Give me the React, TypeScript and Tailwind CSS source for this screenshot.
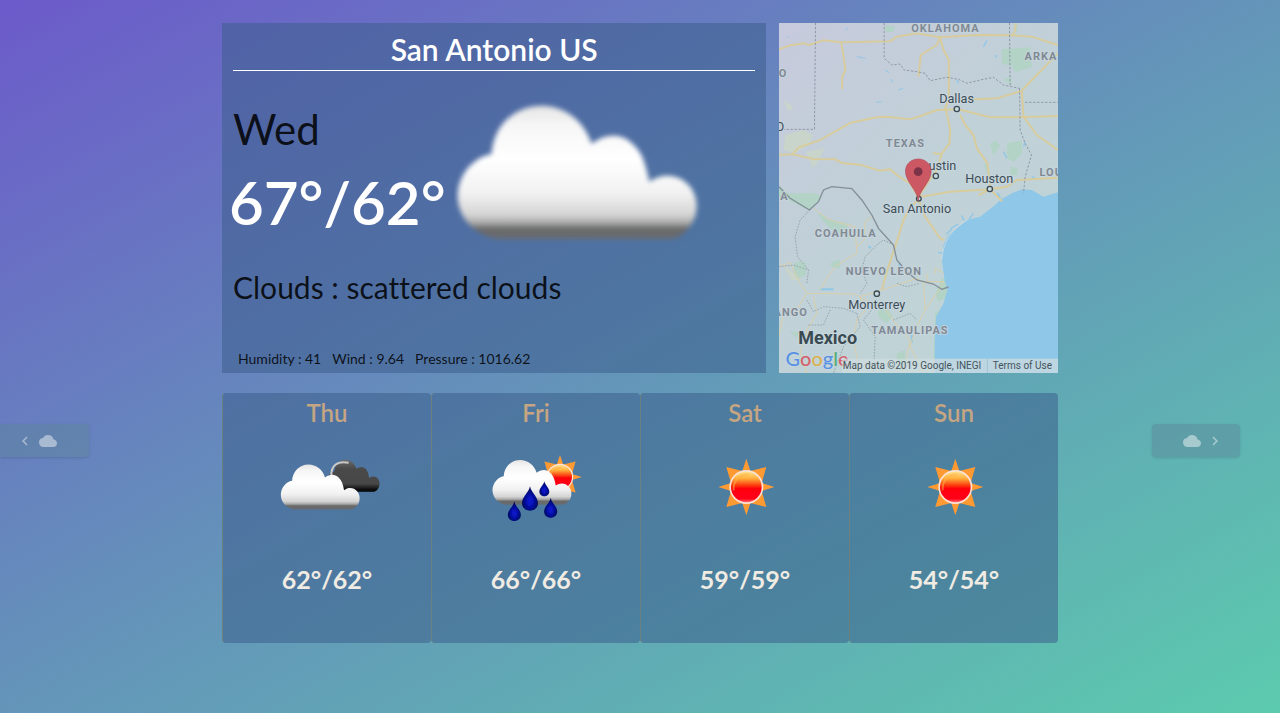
import React from "react";
import { MdCloud, MdChevronLeft, MdChevronRight } from "react-icons/md";

const CLOUD =
  "M165 450 C95 435 48 380 50 315 C55 250 100 205 152 195 C158 110 220 50 302 50 C370 50 430 95 452 165 C490 135 540 130 575 165 C605 190 615 230 625 278 C665 250 715 255 745 290 C782 335 770 400 725 435 C710 447 695 450 685 450 Z";

const RAYS =
  "M0 -85 L12 -48 L60 -60 L46 -12 L84 0 L46 12 L60 60 L12 48 L0 85 L-12 48 L-60 60 L-46 12 L-84 0 L-46 -12 L-60 -60 L-12 -48 Z";

const DROP = "M0 -36 C4 -16 24 -4 24 14 C24 28 13 37 0 37 C-13 37 -24 28 -24 14 C-24 -4 -4 -16 0 -36 Z";

function Defs() {
  return (
    <svg width="0" height="0" className="absolute" aria-hidden="true">
      <defs>
        <linearGradient id="cloud" x1="0" y1="0" x2="0" y2="1">
          <stop offset="0" stopColor="#e4e4e4" />
          <stop offset="0.14" stopColor="#f6f6f6" />
          <stop offset="0.4" stopColor="#ffffff" />
          <stop offset="0.66" stopColor="#f1f1f1" />
          <stop offset="0.82" stopColor="#d4d4d4" />
          <stop offset="0.88" stopColor="#a8a8a8" />
          <stop offset="0.92" stopColor="#696969" />
          <stop offset="1" stopColor="#696c70" />
        </linearGradient>
        <linearGradient id="darkCloud" x1="0" y1="0" x2="0" y2="1">
          <stop offset="0" stopColor="#6b6b6b" />
          <stop offset="0.3" stopColor="#484848" />
          <stop offset="0.75" stopColor="#474747" />
          <stop offset="0.95" stopColor="#080808" />
        </linearGradient>
        <linearGradient id="sun" x1="0" y1="0" x2="0" y2="1">
          <stop offset="0" stopColor="#ffe18c" />
          <stop offset="0.22" stopColor="#ffb03c" />
          <stop offset="0.45" stopColor="#fb3a10" />
          <stop offset="0.55" stopColor="#ff0010" />
          <stop offset="0.88" stopColor="#ff0014" />
          <stop offset="1" stopColor="#ff6a70" />
        </linearGradient>
        <radialGradient id="drop" cx="0.5" cy="0.6" r="0.5">
          <stop offset="0" stopColor="#0a18d8" />
          <stop offset="0.5" stopColor="#0610a8" />
          <stop offset="1" stopColor="#040a5c" />
        </radialGradient>
        <filter id="soft">
          <feGaussianBlur stdDeviation="8" />
        </filter>
        <filter id="softSmall">
          <feGaussianBlur stdDeviation="2" />
        </filter>
      </defs>
    </svg>
  );
}

function SunShape({ x, y }: { x: number; y: number }) {
  return (
    <g transform={`translate(${x} ${y})`}>
      <path d={RAYS} fill="#ff9a33" />
      <circle r="51" fill="#fbe3d6" />
      <circle r="46" fill="url(#sun)" />
      <path d="M-38 10 C-40 -22 -18 -38 6 -38" fill="none" stroke="#ffb347" strokeWidth="5" opacity="0.6" />
    </g>
  );
}

function CloudsIcon() {
  return (
    <svg viewBox="170 144 300 300" className="h-[100px] w-[100px] overflow-visible" aria-label="Broken clouds">
      <g filter="url(#softSmall)">
        <g transform="translate(309 200) scale(0.22 0.24)">
          <path d={CLOUD} fill="url(#darkCloud)" />
        </g>
        <path d="M333 258 C333 232 348 214 385 221" fill="none" stroke="#c9c9c9" strokeWidth="6" />
        <g transform="translate(165 210) scale(0.33 0.336)">
          <path d={CLOUD} fill="url(#cloud)" />
        </g>
      </g>
    </svg>
  );
}

function RainIcon() {
  return (
    <svg viewBox="167 144 300 300" className="h-[100px] w-[100px] overflow-visible" aria-label="Rain">
      <g filter="url(#softSmall)">
        <g transform="translate(389 264) scale(0.78)">
          <SunShape x={0} y={0} />
        </g>
        <g transform="translate(170 196) scale(0.33 0.336)">
          <path d={CLOUD} fill="url(#cloud)" />
        </g>
        <path d={DROP} transform="translate(299 328)" fill="url(#drop)" />
        <path d={DROP} transform="translate(342 299) scale(0.62)" fill="url(#drop)" />
        <path d={DROP} transform="translate(252 366) scale(0.82)" fill="url(#drop)" />
        <path d={DROP} transform="translate(361 356) scale(0.82)" fill="url(#drop)" />
      </g>
    </svg>
  );
}

function SunIcon() {
  return (
    <svg viewBox="164 144 300 300" className="h-[100px] w-[100px] overflow-visible" aria-label="Clear sky">
      <g filter="url(#softSmall)">
        <SunShape x={318} y={294} />
      </g>
    </svg>
  );
}

function BigCloud() {
  return (
    <svg viewBox="39 30 750 450" className="h-[150px] w-[250px] shrink-0" aria-label="Scattered clouds">
      <path d={CLOUD} fill="url(#cloud)" filter="url(#soft)" />
    </svg>
  );
}

function MapView() {
  return (
    <svg viewBox="6 9 837 1050" preserveAspectRatio="xMidYMid slice" className="block h-full w-full" aria-label="Map of San Antonio">
      <defs>
        <linearGradient id="land" x1="0" y1="0" x2="0.7" y2="1">
          <stop offset="0" stopColor="#c7cadd" />
          <stop offset="0.45" stopColor="#c1d0d8" />
          <stop offset="1" stopColor="#bfd5d6" />
        </linearGradient>
      </defs>
      <rect x="0" y="0" width="850" height="1070" fill="url(#land)" />

      <g fill="#c9d4ca">
        <path d="M25 345 l55 -15 30 15 -15 30 -40 25 -35 -10z" />
        <path d="M88 395 l55 -10 -20 40 -15 20z" />
        <path d="M20 240 l30 20 -15 15z M15 730 l60 50 -30 0z" />
      </g>
      <g fill="#b2d3c6">
        <path d="M325 16 l28 2 -2 18 -24 0z" />
        <path d="M10 500 l25 20 80 0 20 10 -35 40 -20 -5 -50 -28 -30 -10z" />
        <path d="M120 578 l40 22 50 10 8 50 -30 -20 -35 -20z" />
        <path d="M52 728 l35 -2 0 40 -25 10 -12 -20z M160 728 l30 -10 0 25 -22 0z" />
        <path d="M303 872 l28 -8 18 25 -20 20 -22 -15z M38 935 l25 0 0 20z M360 1000 l25 -10 0 60 -25 0z" />
        <path d="M675 88 l85 -6 5 60 -50 15 -10 -20 -30 -5z M710 12 l12 0 0 25z M680 180 l20 -10 5 25z" />
        <path d="M640 370 l18 -8 12 15 -20 30z M690 370 l45 -8 0 40 -25 25 -20 -15z M700 440 l22 5 0 20 -20 0z M620 430 l15 10 -5 20z" />
        <path d="M495 775 l15 5 0 50 -25 15 -10 -20z M475 880 l15 -10 -10 30 -5 120 -5 0z" />
      </g>

      <path
        d="M850 515 L800 530 L765 510 L735 508 L705 520 L670 540 L655 555 L610 590 L570 600 L545 620 L515 645 L500 675 L495 720 L503 780 L512 808 L500 850 L478 890 L474 960 L474 1070 L850 1070 Z"
        fill="#8fc7e8"
      />
      <g fill="none" stroke="#8fc7e8" strokeWidth="4">
        <path d="M662 518 l12 24 M590 580 l-14 18 M545 612 l-24 14 M525 628 l-18 14 M500 700 l-16 -3 M562 602 l-8 -16" />
        <path d="M240 110 l25 5 M325 150 l12 8 M298 247 l15 -2 M340 178 l10 8 M30 50 l5 0 M205 30 l8 -6 M365 210 l14 -5" strokeWidth="3" />
        <path d="M620 80 l10 -18 M655 105 l5 8 M540 180 l5 10 M680 395 l10 20 M745 365 l-5 15 M765 470 l10 5 M765 50 l8 0" />
        <path d="M130 808 l40 0 M366 730 l5 10 M405 945 l0 25 M275 680 l8 4" strokeWidth="6" />
      </g>
      <path d="M572 600 C520 630 498 670 495 720" fill="none" stroke="#d3e3e8" strokeWidth="2" />

      <g fill="none" stroke="#d8cc9d" strokeWidth="6" strokeLinejoin="round">
        <path d="M6 88 L40 76 L83 70 L98 75 L138 61 L193 67 L340 64 L360 50 L420 40 L490 52 L600 45 L705 46 L765 50 L843 75" />
        <path d="M193 70 L198 95 L206 150 L196 170 L196 208" />
        <path d="M6 404 L46 403 L66 382 L130 360 L222 308 L300 292 L330 290 L400 298 L440 285 L480 270 L545 268 L640 292 L720 292 L843 288" />
        <path d="M46 403 L110 417 L175 418 L198 430 L250 434 L308 452 L340 448 L360 465 L400 490 L424 532" />
        <path d="M490 50 L480 75 L432 105 L425 170" />
        <path d="M490 55 L500 90 L516 120 L516 235 L505 265 L512 290 L520 330 L518 370 L495 400 L480 450 L448 495 L424 535" />
        <path d="M717 10 L715 30 L706 50 M516 242 L660 235 L735 212 L765 180 L843 100" />
        <path d="M550 285 L565 315 L590 345 L600 385 L632 430 L640 500" />
        <path d="M735 212 L740 290 L780 345 L843 390" />
        <path d="M424 532 L520 515 L640 508 L690 500 L720 480 L843 473" />
        <path d="M424 535 L445 590 L490 655 L502 660 M640 508 L676 544 M640 508 L605 525" />
        <path d="M424 540 L400 560 L380 600 L355 680 L330 755 L315 810 M468 400 L495 402" />
      </g>
      <g fill="none" stroke="#dacfaa" strokeWidth="3" strokeLinejoin="round">
        <path d="M110 565 L150 595 L175 605 L235 620 L240 700 L205 720 L175 740 L150 775 L130 810" />
        <path d="M6 740 L40 728 L70 790 L90 820 L230 822 L250 830 L300 815 L360 795 L420 775 L440 785 L500 785" />
        <path d="M285 590 L265 605 L262 660 L240 680" />
        <path d="M90 820 L65 860 L20 880 L6 950 M110 830 L120 880 L90 930 L70 1000 L90 1059" />
        <path d="M250 830 L265 870 L240 900 L230 960 L250 1059" />
        <path d="M250 835 L320 860 L370 930 L400 960 L380 1059 M440 785 L445 870 L480 820 L500 785" />
        <path d="M445 870 L415 930 L400 980 L440 1059 M500 760 L475 745 L475 760 M450 785 L450 760" />
      </g>

      <g fill="none" stroke="#8f98a5" strokeWidth="3" strokeDasharray="7 5">
        <path d="M116 9 L113 328 L20 328 M322 9 L322 115 L345 135 L370 132 L382 150 L420 155 L445 160 L460 182 L510 172 L545 178 L570 190 L610 180 L650 172 L680 195 L728 205" />
        <path d="M698 9 L700 198 M728 205 L730 330 L745 370 L764 405 L745 470 L740 520 M745 247 L843 247" />
      </g>
      <g fill="none" stroke="#98a6ae" strokeWidth="3" strokeDasharray="5 4">
        <path d="M100 568 L70 600 L55 650 L62 710 L95 750 L90 790" />
        <path d="M6 740 L50 735 L95 750 M90 840 L110 875 L140 860 L200 865 L240 880 M95 915 L140 915 L160 870" />
        <path d="M350 675 L320 660 L300 675 L265 710 L255 750 L270 790 L250 820" />
        <path d="M240 880 L250 920 L200 980 L170 1059 M300 850 L260 900 L295 950 L290 1059 M360 790 L390 800 L430 790 M350 900 L400 880 L420 900" />
      </g>
      <path
        d="M6 500 L40 535 L98 570 L125 545 L140 510 L165 500 L225 506 L255 540 L285 585 L305 625 L350 675 L360 720 L390 755 L420 780 L470 792 L495 808 L515 801"
        fill="none"
        stroke="#848e98"
        strokeWidth="4"
      />

      <g className="font-['Roboto',sans-serif] text-[33px] font-bold tracking-[3px]" fill="#7f8994" stroke="#c9d6dd" strokeWidth="5" paintOrder="stroke">
        <text x="403" y="36">OKLAHOMA</text>
        <text x="743" y="119">ARKA</text>
        <text x="327" y="381">TEXAS</text>
        <text x="6" y="170">O</text>
        <text x="10" y="540">A</text>
        <text x="788" y="467">LOU</text>
        <text x="114" y="650">COAHUILA</text>
        <text x="207" y="765">NUEVO LEON</text>
        <text x="-10" y="887">ANGO</text>
        <text x="283" y="942">TAMAULIPAS</text>
      </g>
      <g className="font-['Roboto',sans-serif] text-[38px]" fill="#3c4c57" stroke="#c9d8de" strokeWidth="5" paintOrder="stroke">
        <text x="487" y="248">Dallas</text>
        <text x="455" y="449">ustin</text>
        <text x="565" y="490">Houston</text>
        <text x="318" y="580">San Antonio</text>
        <text x="214" y="866">Monterrey</text>
        <text x="-4" y="332">O</text>
      </g>
      <g fill="#c9d8de" stroke="#3c4c57" strokeWidth="4">
        <circle cx="540" cy="267" r="8" />
        <circle cx="477" cy="468" r="8" />
        <circle cx="639" cy="507" r="8" />
        <circle cx="300" cy="821" r="8" />
        <circle cx="426" cy="536" r="7" />
      </g>
      <text x="64" y="972" className="font-['Roboto',sans-serif] text-[54px] font-bold" fill="#3a4a52" stroke="#c9d8de" strokeWidth="5" paintOrder="stroke">
        Mexico
      </text>

      <path
        d="M424 542 C422 510 386 486 386 454 C386 432 403 417 424 417 C445 417 463 432 463 454 C463 486 427 510 424 542 Z"
        fill="#cc5863"
        stroke="#b04a5e"
        strokeWidth="2"
      />
      <circle cx="424" cy="455" r="13" fill="#7c3347" />

      <text x="26" y="1038" className="font-['Lato',sans-serif] text-[60px] font-medium" stroke="#cbdde0" strokeWidth="3" paintOrder="stroke">
        <tspan fill="#5a90e4">G</tspan>
        <tspan fill="#d4606c">o</tspan>
        <tspan fill="#dbb04e">o</tspan>
        <tspan fill="#5a90e4">g</tspan>
        <tspan fill="#57ab78">l</tspan>
        <tspan fill="#d4606c">e</tspan>
      </text>
      <rect x="195" y="1016" width="650" height="43" fill="#d0dde0" opacity="0.7" />
      <rect x="630" y="1016" width="3" height="43" fill="#9dc5d8" />
      <g className="font-['Roboto',sans-serif] text-[30px]" fill="#44545c">
        <text x="198" y="1047">Map data ©2019 Google, INEGI</text>
        <text x="648" y="1047">Terms of Use</text>
      </g>
    </svg>
  );
}

const days = [
  { day: "Thu", temps: "62°/62°", icon: <CloudsIcon /> },
  { day: "Fri", temps: "66°/66°", icon: <RainIcon /> },
  { day: "Sat", temps: "59°/59°", icon: <SunIcon /> },
  { day: "Sun", temps: "54°/54°", icon: <SunIcon /> },
];

export default function App() {
  return (
    <div className="flex min-h-screen items-start justify-between bg-[linear-gradient(to_bottom_right,#6c5aca,#6495b9_50%,#5ccbae)] font-['Lato','Noto_Sans',sans-serif] [font-variant-ligatures:none]">
      <Defs />
      <nav className="flex h-screen flex-1 items-center justify-start pt-[168px]">
        <button
          type="button"
          aria-label="Previous city"
          className="flex h-[33px] w-[89px] items-center gap-[5px] rounded-r-sm bg-[#5d8598]/45 px-4 text-white/45 shadow"
        >
          <MdChevronLeft size={18} />
          <MdCloud size={18} />
        </button>
      </nav>

      <main className="w-[836px] max-w-full py-[23px]">
        <div className="flex gap-[13px]">
          <section className="flex h-[350px] flex-1 flex-col bg-[#3c5f8c]/55 px-[11px] text-black/85">
            <h1 className="h-12 border-b border-white pt-1.5 text-center text-[30px] leading-10 font-semibold text-white">
              San Antonio US
            </h1>
            <div className="flex pt-7">
              <div className="w-[221px] shrink-0">
                <h2 className="pt-1 text-[42px] leading-[52px]">Wed</h2>
                <p className="-mx-1 pt-4 text-[60px] leading-[62px] font-semibold whitespace-nowrap text-white">67°/62°</p>
              </div>
              <BigCloud />
            </div>
            <p className="pt-[18px] text-[30px] leading-10">Clouds : scattered clouds</p>
            <ul className="mt-auto flex gap-[11px] px-[5px] pb-1 text-[14px] leading-5">
              <li>Humidity : 41</li>
              <li>Wind : 9.64</li>
              <li>Pressure : 1016.62</li>
            </ul>
          </section>
          <aside className="h-[350px] w-1/3">
            <MapView />
          </aside>
        </div>

        <div className="grid grid-cols-4 pt-5">
          {days.map(({ day, temps, icon }) => (
            <article
              key={day}
              className="flex h-[250px] flex-col items-center rounded border-l border-[#6b8080] bg-[#3c5f8c]/55"
            >
              <h3 className="pt-0.5 text-[24px] leading-9 font-semibold text-[#c5a582]">{day}</h3>
              <div className="pt-1.5">{icon}</div>
              <p className="pt-[26px] text-[25px] leading-8 font-bold text-[#f0ebe3]">{temps}</p>
            </article>
          ))}
        </div>
      </main>

      <nav className="flex h-screen flex-1 items-center justify-end pt-[168px]">
        <button
          type="button"
          aria-label="Next city"
          className="mr-10 flex h-[33px] w-[88px] items-center justify-end gap-[5px] rounded-sm bg-[#5d8598]/45 px-4 text-white/45 shadow"
        >
          <MdCloud size={18} />
          <MdChevronRight size={18} />
        </button>
      </nav>
    </div>
  );
}
